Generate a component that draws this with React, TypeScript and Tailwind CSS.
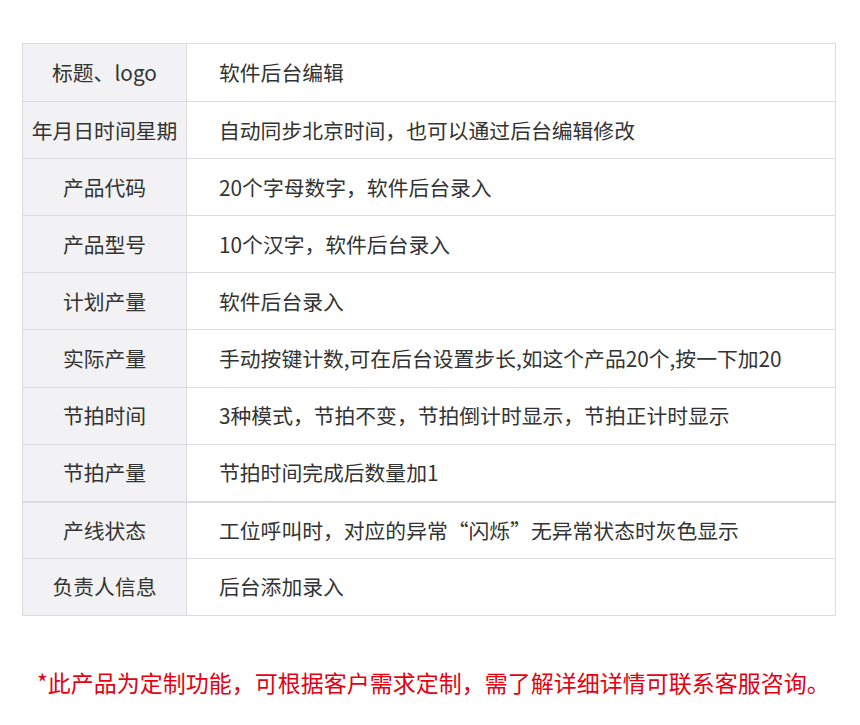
const rows: [string, string][] = [
    ["标题、logo", "软件后台编辑"],
    ["年月日时间星期", "自动同步北京时间，也可以通过后台编辑修改"],
    ["产品代码", "20个字母数字，软件后台录入"],
    ["产品型号", "10个汉字，软件后台录入"],
    ["计划产量", "软件后台录入"],
    ["实际产量", "手动按键计数,可在后台设置步长,如这个产品20个,按一下加20"],
    ["节拍时间", "3种模式，节拍不变，节拍倒计时显示，节拍正计时显示"],
    ["节拍产量", "节拍时间完成后数量加1"],
    ["产线状态", "工位呼叫时，对应的异常“闪烁”无异常状态时灰色显示"],
    ["负责人信息", "后台添加录入"],
];

export default function App() {
    return (
        <div
            className="w-[860px] h-[725px] bg-white pt-[43px]"
            style={{ fontFamily: '"Noto Sans CJK SC", "Noto Sans", sans-serif' }}
        >
            <div className="mx-[22px] w-[814px] border border-[#dcdcdc]">
                {rows.map(([label, value], i) => (
                    <div
                        key={label}
                        className={`grid grid-cols-[164px_1fr] h-[57.1px] ${
                            i === 0
                                ? ""
                                : i === 8
                                ? "border-t-2 border-[#dcdcdc]"
                                : "border-t border-[#dcdcdc]"
                        }`}
                    >
                        <div className="flex items-center justify-center bg-[#f2f2f4] border-r border-[#dcdcdc] text-[20.8px] text-[#333]">
                            {label}
                        </div>
                        <div className="flex items-center pl-[32px] text-[20.8px] text-[#333]">
                            {value}
                        </div>
                    </div>
                ))}
            </div>
            <div className="mt-[55px] pl-[37px] text-[23px] text-[#e60012] leading-none">
                *此产品为定制功能，可根据客户需求定制，需了解详细详情可联系客服咨询。
            </div>
        </div>
    );
}
